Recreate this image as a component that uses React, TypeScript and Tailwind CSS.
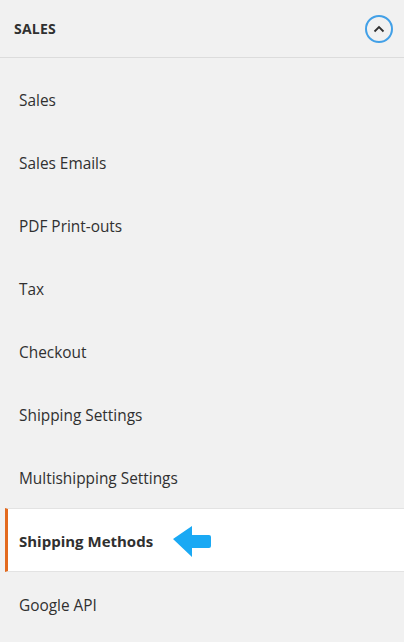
import React from 'react';

const items = [
  'Sales',
  'Sales Emails',
  'PDF Print-outs',
  'Tax',
  'Checkout',
  'Shipping Settings',
  'Multishipping Settings',
  'Shipping Methods',
  'Google API',
];

const ACTIVE = 'Shipping Methods';

const LeftArrow = () => (
  <svg width="40" height="32" viewBox="0 0 40 32" className="ml-[19px]">
    <path d="M1 13 L20 0 L20 9 L37 9 Q39 9 39 11 L39 20 Q39 22 37 22 L20 22 L20 31 Z" fill="#1aa9f4" />
  </svg>
);

const App = () => {
  return (
    <div
      className="w-[404px] h-[642px] bg-[#f1f1f1] overflow-hidden text-[#303030]"
      style={{ fontFamily: '"Open Sans", "Noto Sans", sans-serif' }}
    >
      <div className="h-[58px] flex items-center justify-between pl-[14px] pr-[11px] border-b border-[#dcdcdc]">
        <span className="text-[14px] font-bold tracking-[0.2px]">SALES</span>
        <span className="w-[28px] h-[28px] rounded-full border-[2.5px] border-[#42a0e7] flex items-center justify-center">
          <svg width="12" height="8" viewBox="0 0 12 8">
            <path d="M1.5 6.5 L6 2 L10.5 6.5" fill="none" stroke="#303030" strokeWidth="1.8" />
          </svg>
        </span>
      </div>
      <div className="pt-[9px]">
        {items.map((item) =>
          item === ACTIVE ? (
            <div
              key={item}
              className="ml-[5px] h-[64px] pt-[3px] flex items-center bg-white border-l-[3px] border-[#e36a1f] border-y border-y-[#e3e3e3] pl-[11px]"
            >
              <span className="text-[15px] font-bold">{item}</span>
              <LeftArrow />
            </div>
          ) : (
            <div key={item} className="h-[63px] pt-[4px] flex items-center pl-[19px]">
              <span className="text-[15.4px]">{item}</span>
            </div>
          )
        )}
      </div>
    </div>
  );
};

export default App;
